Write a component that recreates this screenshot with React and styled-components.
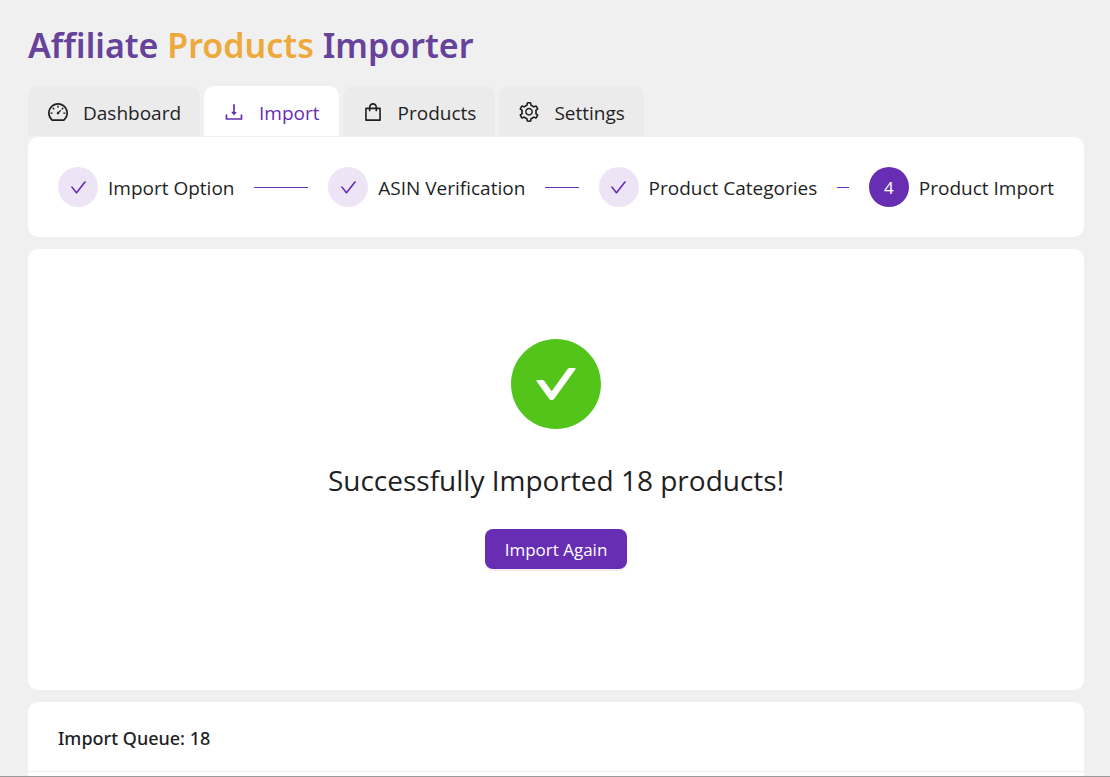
import React from "react";
import styled, { createGlobalStyle, css } from "styled-components";
import {
  AiOutlineDashboard,
  AiOutlineDownload,
  AiOutlineShopping,
  AiOutlineSetting,
  AiOutlineCheck,
  AiFillCheckCircle,
} from "react-icons/ai";

const purple = "#672eb4";
const ink = "#1f1f1f";
const iconBox = "64 64 896 896";

const GlobalStyle = createGlobalStyle`
  *, *::before, *::after { box-sizing: border-box; }
  body {
    margin: 0;
    background: #f0f0f0;
    color: ${ink};
    font-family: "Segoe UI", "Open Sans", "Noto Sans", sans-serif;
  }
`;

const Page = styled.div`
  display: flex;
  flex-direction: column;
  min-height: 100vh;
  padding: 20px 26px 0 28px;
  border-bottom: 1px solid #999;
`;

const Title = styled.h1`
  margin: 0 0 16px;
  color: #67429a;
  font-family: "Trebuchet MS", "Noto Sans", sans-serif;
  font-size: 34px;
  font-weight: 600;
  line-height: 50px;
  white-space: nowrap;
`;

const Accent = styled.span`
  color: #eea93c;
`;

const Tabs = styled.nav`
  display: flex;
  gap: 4px;
`;

const Tab = styled.button`
  display: flex;
  align-items: center;
  gap: 15px;
  height: 50px;
  margin: 0 0 1px;
  padding: 2px 19px 0 20px;
  border: 0;
  border-radius: 10px 10px 0 0;
  background: #ebebeb;
  color: ${ink};
  font: inherit;
  font-size: 19px;
  line-height: 30px;
  cursor: pointer;
  ${(p) =>
    p.$active &&
    css`
      background: #fff;
      color: ${purple};
    `}
`;

const TabLabel = styled.span`
  padding-top: 2px;
`;

const Card = styled.section`
  background: #fff;
  border-radius: 10px;
`;

const Steps = styled.ol`
  display: flex;
  margin: 0 0 12px;
  padding: 30px;
  list-style: none;
  background: #fff;
  border-radius: 10px;
`;

const Step = styled.li`
  display: flex;
  flex: 1 0 0;
  align-items: center;
  height: 40px;
  padding-right: 20px;
  font-size: 19px;
  white-space: nowrap;

  &:last-child {
    flex: none;
    padding-right: 0;
  }

  &:not(:last-child)::after {
    content: "";
    flex: 1;
    height: 1px;
    margin-left: 20px;
    background: ${purple};
  }
`;

const StepLabel = styled.span`
  padding-top: 2px;
  line-height: 30px;
`;

const StepBadge = styled.span`
  display: flex;
  align-items: center;
  justify-content: center;
  width: 40px;
  height: 40px;
  margin-right: 10px;
  border-radius: 50%;
  background: ${(p) => (p.$current ? purple : "#ede5f5")};
  color: ${(p) => (p.$current ? "#fff" : purple)};
  font-size: 17px;
`;

const Result = styled(Card)`
  display: flex;
  flex-direction: column;
  align-items: center;
  margin-bottom: 12px;
  padding: 90px 30px 121px;

  svg {
    display: block;
    color: #52c41a;
  }
`;

const Message = styled.h2`
  margin: 31px 0 29px;
  font-size: 28px;
  font-weight: 400;
  line-height: 40px;
`;

const PrimaryButton = styled.button`
  height: 40px;
  padding: 2px 20px 0;
  border: 0;
  border-radius: 8px;
  background: ${purple};
  box-shadow: 0 2px 0 rgba(103, 46, 180, 0.1);
  color: #fff;
  font: inherit;
  font-size: 17px;
  line-height: 38px;
  cursor: pointer;
`;

const Queue = styled(Card)`
  flex: 1;
  border-radius: 10px 10px 0 0;
`;

const QueueTitle = styled.h3`
  margin: 0;
  padding: 21px 30px 18px;
  border-bottom: 1px solid #f0f0f0;
  font-family: "Segoe UI", "Noto Sans", sans-serif;
  font-size: 18px;
  font-weight: 500;
  line-height: 30px;
`;

const tabs = [
  { label: "Dashboard", Icon: AiOutlineDashboard },
  { label: "Import", Icon: AiOutlineDownload, active: true },
  { label: "Products", Icon: AiOutlineShopping },
  { label: "Settings", Icon: AiOutlineSetting },
];

const steps = [
  { label: "Import Option", done: true },
  { label: "ASIN Verification", done: true },
  { label: "Product Categories", done: true },
  { label: "Product Import", done: false },
];

export default function App() {
  return (
    <>
      <GlobalStyle />
      <Page>
        <Title>
          Affiliate <Accent>Products</Accent> Importer
        </Title>
        <Tabs>
          {tabs.map(({ label, Icon, active }) => (
            <Tab key={label} type="button" $active={active} aria-current={active ? "page" : undefined}>
              <Icon size={20} viewBox={iconBox} aria-hidden="true" />
              <TabLabel>{label}</TabLabel>
            </Tab>
          ))}
        </Tabs>
        <Steps>
          {steps.map(({ label, done }, i) => (
            <Step key={label}>
              <StepBadge $current={!done}>
                {done ? <AiOutlineCheck size={17} viewBox={iconBox} aria-label="Done" /> : i + 1}
              </StepBadge>
              <StepLabel>{label}</StepLabel>
            </Step>
          ))}
        </Steps>
        <Result>
          <AiFillCheckCircle size={90} viewBox={iconBox} aria-hidden="true" />
          <Message>Successfully Imported 18 products!</Message>
          <PrimaryButton type="button">Import Again</PrimaryButton>
        </Result>
        <Queue>
          <QueueTitle>Import Queue: 18</QueueTitle>
        </Queue>
      </Page>
    </>
  );
}
